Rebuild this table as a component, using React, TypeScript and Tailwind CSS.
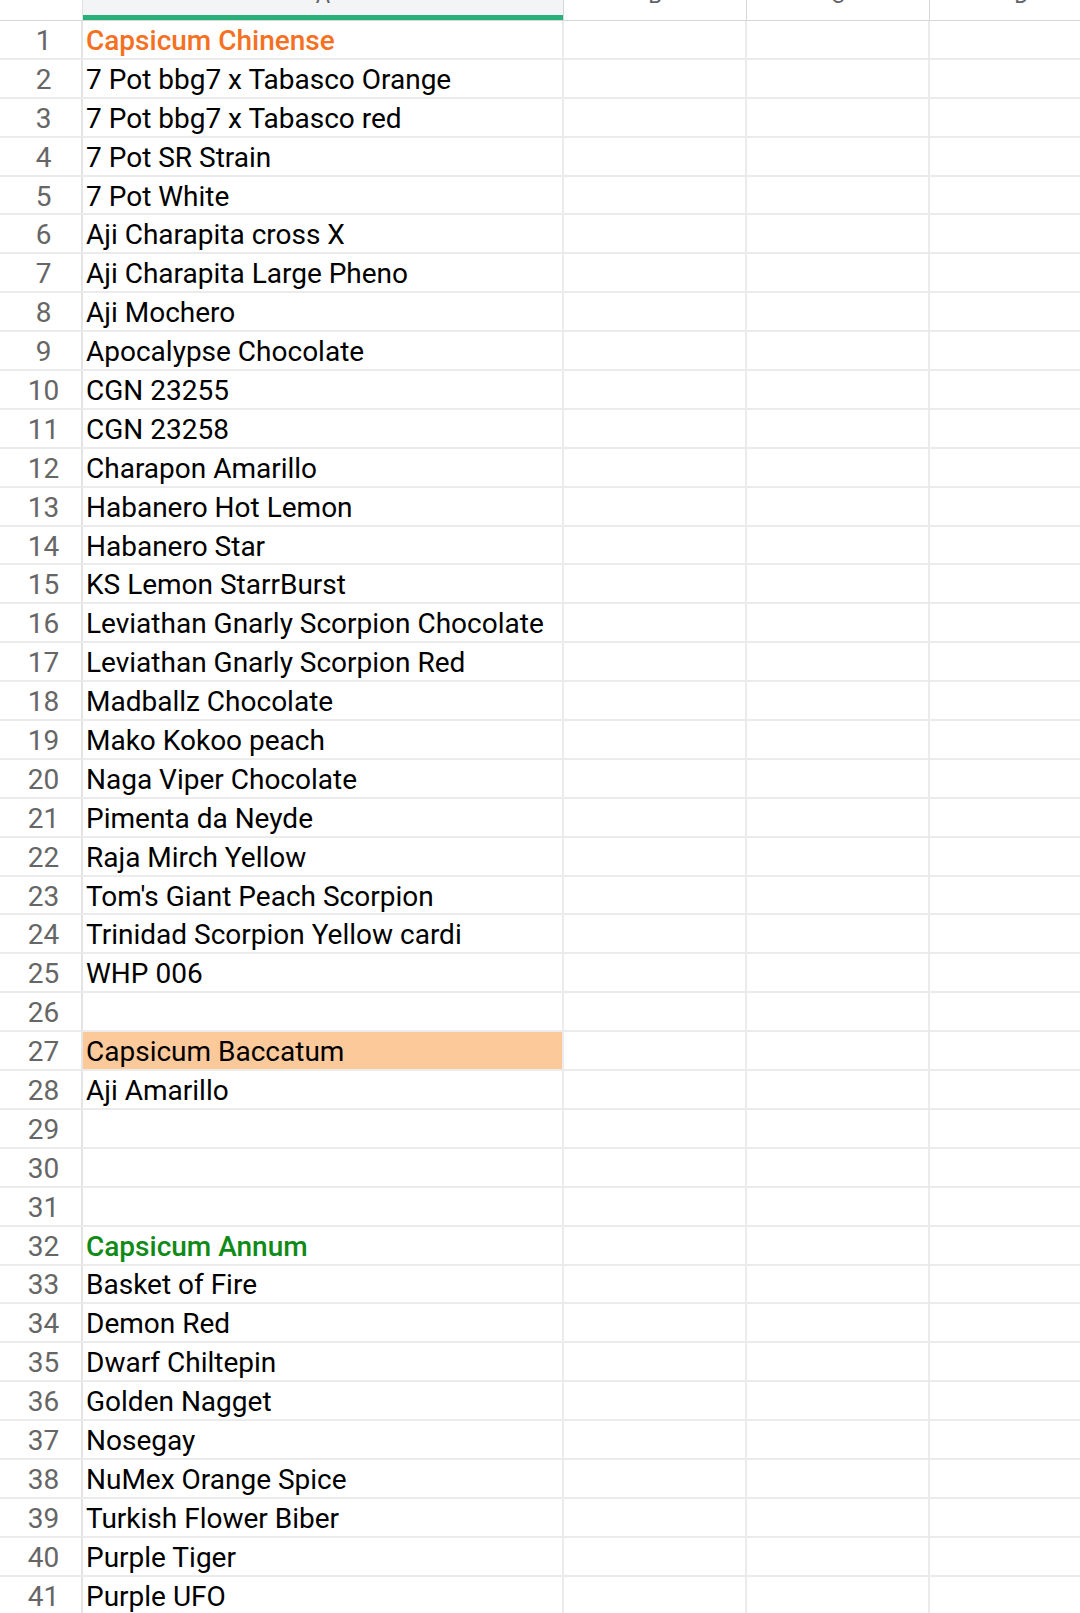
import React from "react";

type Row = { text?: string; tone?: "orange" | "green" | "peach" };

const ROWS: Row[] = [
  { text: "Capsicum Chinense", tone: "orange" },
  { text: "7 Pot bbg7 x Tabasco Orange" },
  { text: "7 Pot bbg7 x Tabasco red" },
  { text: "7 Pot SR Strain" },
  { text: "7 Pot White" },
  { text: "Aji Charapita cross X" },
  { text: "Aji Charapita Large Pheno" },
  { text: "Aji Mochero" },
  { text: "Apocalypse Chocolate" },
  { text: "CGN 23255" },
  { text: "CGN 23258" },
  { text: "Charapon Amarillo" },
  { text: "Habanero Hot Lemon" },
  { text: "Habanero Star" },
  { text: "KS Lemon StarrBurst" },
  { text: "Leviathan Gnarly Scorpion Chocolate" },
  { text: "Leviathan Gnarly Scorpion Red" },
  { text: "Madballz Chocolate" },
  { text: "Mako Kokoo peach" },
  { text: "Naga Viper Chocolate" },
  { text: "Pimenta da Neyde" },
  { text: "Raja Mirch Yellow" },
  { text: "Tom's Giant Peach Scorpion" },
  { text: "Trinidad Scorpion Yellow cardi" },
  { text: "WHP 006" },
  {},
  { text: "Capsicum Baccatum", tone: "peach" },
  { text: "Aji Amarillo" },
  {},
  {},
  {},
  { text: "Capsicum Annum", tone: "green" },
  { text: "Basket of Fire" },
  { text: "Demon Red" },
  { text: "Dwarf Chiltepin" },
  { text: "Golden Nagget" },
  { text: "Nosegay" },
  { text: "NuMex Orange Spice" },
  { text: "Turkish Flower Biber" },
  { text: "Purple Tiger" },
  { text: "Purple UFO" },
];

const cellA = (tone?: Row["tone"]) => {
  if (tone === "orange") return "text-[#f5701f] font-medium bg-white";
  if (tone === "green") return "text-[#108a17] font-medium bg-white";
  if (tone === "peach") return "text-black bg-[#fcc99b]";
  return "text-black bg-white";
};

const HeaderCell = ({ label, className }: { label: string; className: string }) => (
  <div className={`h-full overflow-hidden ${className}`}>
    <div className="-mt-[15px] text-center text-[22px] leading-[22px] text-[#5f6368]">{label}</div>
  </div>
);

export default function App() {
  return (
    <div
      className="h-[1613px] w-[1080px] overflow-hidden bg-white"
      style={{ fontFamily: "Roboto, 'Noto Sans', sans-serif" }}
    >
      {/* column header, scrolled so only the letter bottoms show */}
      <div className="flex h-[21px] border-b border-[#d6d6d6]">
        <div className="h-full w-[83px] shrink-0 border-r border-[#e0e0e0]" />
        <div className="relative h-full w-[481px] shrink-0 border-r border-[#d6d6d6] bg-[#f3f4f6]">
          <HeaderCell label="A" className="" />
          <div className="absolute inset-x-0 bottom-0 h-[5px] bg-[#27b07a]" />
        </div>
        <HeaderCell label="B" className="w-[183px] shrink-0 border-r border-[#d6d6d6]" />
        <HeaderCell label="C" className="w-[183px] shrink-0 border-r border-[#d6d6d6]" />
        <HeaderCell label="D" className="w-[183px] shrink-0" />
      </div>

      {ROWS.map((r, i) => (
        <div key={i} className="flex h-[38.9px] border-b-2 border-[#ebebeb]">
          <div className="flex w-[83px] shrink-0 items-center justify-center border-r-2 border-[#e4e4e4] pl-[6px] pt-[3px] text-[28px] leading-none text-[#666666]">
            {i + 1}
          </div>
          <div
            className={`flex w-[481px] shrink-0 items-center overflow-hidden whitespace-nowrap border-r-2 border-[#ebebeb] pl-[3px] pt-[3px] text-[28px] leading-none ${cellA(r.tone)}`}
          >
            {r.text}
          </div>
          <div className="w-[183px] shrink-0 border-r-2 border-[#ebebeb]" />
          <div className="w-[183px] shrink-0 border-r-2 border-[#ebebeb]" />
          <div className="flex-1" />
        </div>
      ))}
    </div>
  );
}
